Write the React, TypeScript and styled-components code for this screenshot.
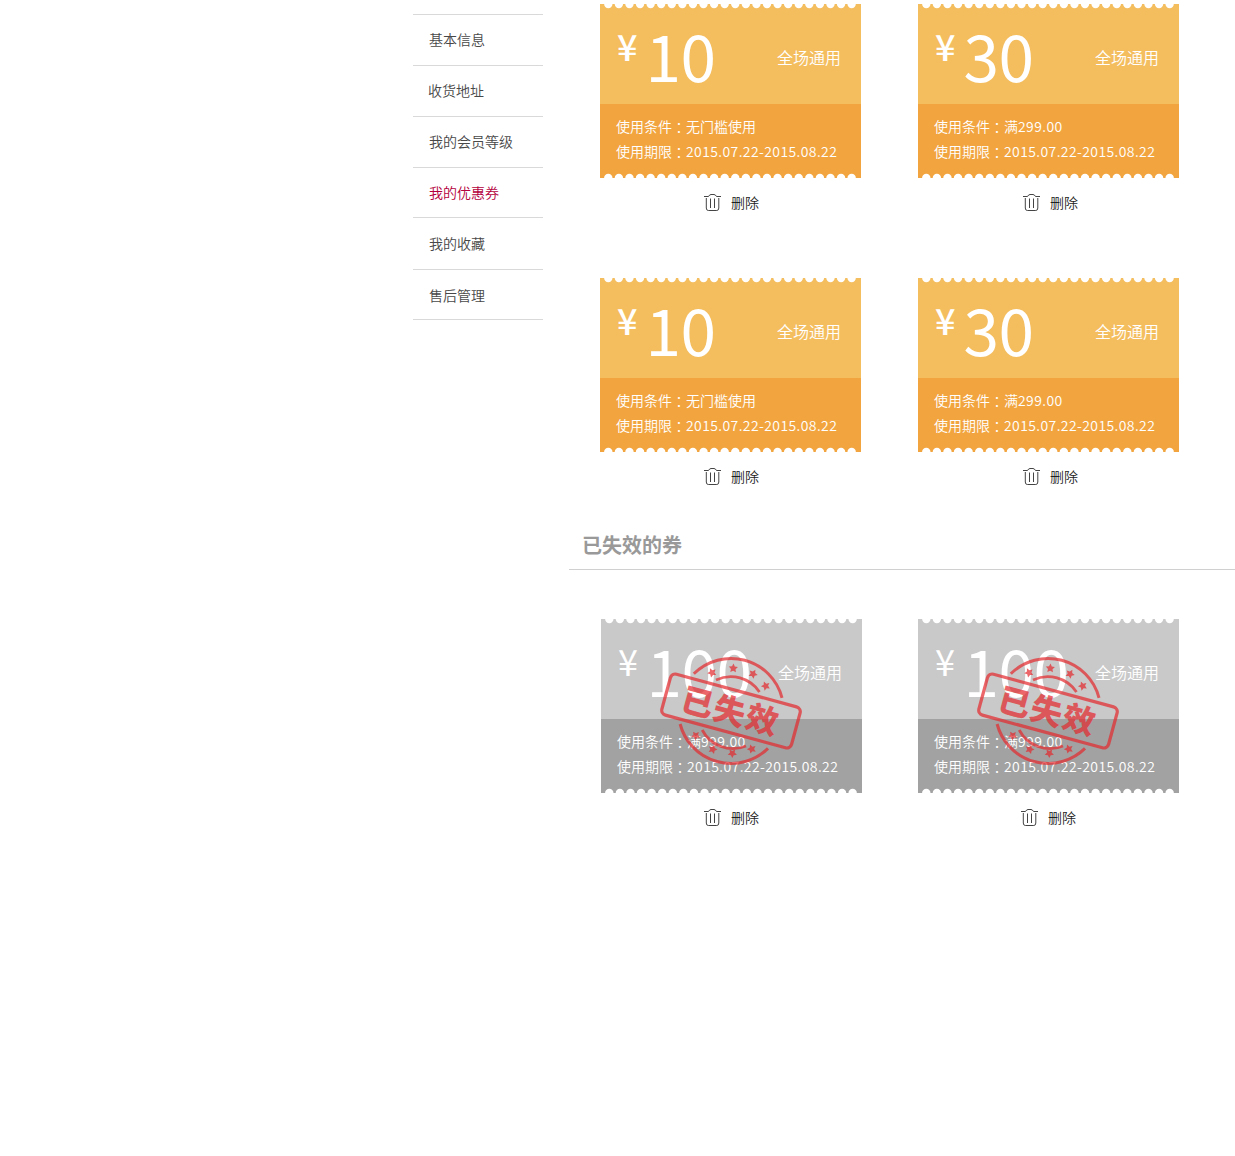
import React from "react";
import styled, { createGlobalStyle, css } from "styled-components";

const GlobalStyle = createGlobalStyle`
  * { box-sizing: border-box; }
  body {
    margin: 0;
    background: #fff;
    font-family: "Noto Sans CJK SC", "Liberation Sans", sans-serif;
  }
  ul { margin: 0; padding: 0; list-style: none; }
`;

const Page = styled.div`
  display: flex;
  align-items: flex-start;
  width: 1235px;
  height: 1156px;
  padding-left: 413px;
  overflow: hidden;
`;

const Sidebar = styled.nav`
  flex: none;
  width: 130px;
  margin-top: 14px;
  border-top: 1px solid #d9d9d9;
`;

const MenuItem = styled.li<{ $active?: boolean; $height: number; $indent: number; $line: number }>`
  height: ${(p) => p.$height}px;
  padding-left: ${(p) => p.$indent}px;
  border-bottom: 1px solid #d9d9d9;
  font-size: 14px;
  font-weight: 350;
  line-height: ${(p) => p.$line}px;
  color: ${(p) => (p.$active ? "#b4003c" : "#484848")};
`;

const Main = styled.main`
  flex: none;
  width: 666px;
  margin-left: 26px;
  padding-top: 4px;
`;

const CouponRow = styled.div<{ $left: number; $gap: number }>`
  display: flex;
  gap: ${(p) => p.$gap}px;
  padding-left: ${(p) => p.$left}px;
`;

const CouponCell = styled.div`
  width: 261px;
  height: 274px;
`;

const Ticket = styled.article`
  position: relative;
  width: 261px;
  height: 174px;
  color: #fff;
`;

const TicketTop = styled.div<{ $expired?: boolean }>`
  display: flex;
  height: 100px;
  padding: 0 20px 0 17px;
  background: ${(p) => (p.$expired ? "#c9c9c9" : "#f4bd5e")};
`;

const Currency = styled.span<{ $expired?: boolean }>`
  width: 28.5px;
  padding-top: 15px;
  font-size: 36px;
  font-weight: ${(p) => (p.$expired ? 400 : 500)};
  line-height: 52px;
`;

const Amount = styled.span`
  padding-top: 4px;
  font-size: 64px;
  line-height: 92px;
  letter-spacing: -0.5px;
`;

const Scope = styled.span`
  margin-left: auto;
  padding-top: 41px;
  font-size: 16px;
  font-weight: 350;
  line-height: 24px;
`;

const TicketBottom = styled.div<{ $expired?: boolean }>`
  height: 74px;
  padding: 10px 0 0 16px;
  background: ${(p) => (p.$expired ? "#a2a2a2" : "#f2a53f")};
`;

const Term = styled.div`
  display: flex;
  height: 25px;
  font-size: 14px;
  font-weight: 350;
  line-height: 25px;
  white-space: nowrap;
`;

const Colon = styled.span`
  padding-top: 1px;
  font-family: "Noto Sans CJK TC", sans-serif;
`;

const Digits = styled.span`
  letter-spacing: 0.4px;
`;

const Edge = styled.svg<{ $side: "top" | "bottom" }>`
  position: absolute;
  left: 0;
  ${(p) => (p.$side === "top" ? css`top: 0;` : css`bottom: 0; transform: scaleY(-1);`)}
  display: block;
`;

const StampMark = styled.svg`
  position: absolute;
  left: 55px;
  top: 32px;
  overflow: visible;
`;

const DeleteButton = styled.button<{ $shift: number }>`
  display: flex;
  align-items: center;
  gap: 10px;
  height: 24px;
  margin: 12px 0 0 ${(p) => p.$shift}px;
  padding: 0;
  border: 0;
  background: none;
  color: #222;
  font-family: inherit;
  font-size: 14px;
  font-weight: 350;
  line-height: 24px;
`;

const SectionTitle = styled.h2`
  height: 50px;
  margin: -32px 0 49px;
  padding-left: 13px;
  border-bottom: 1px solid #d0d0d0;
  color: #999;
  font-size: 20px;
  font-weight: 700;
  line-height: 50px;
`;

function Scallops({ side }: { side: "top" | "bottom" }) {
  return (
    <Edge $side={side} width="261" height="5" viewBox="0 0 261 5" fill="#fff">
      {Array.from({ length: 24 }, (_, i) => (
        <circle key={i} cx={8.3 + i * 10.58} cy="0" r="4.2" />
      ))}
    </Edge>
  );
}

function TrashIcon() {
  return (
    <svg width="17" height="18" viewBox="0 0 17 18" fill="none" stroke="#444" strokeWidth="1">
      <path d="M0 3.5h4.5Q5.5 1.5 7 1.5h3Q11.5 1.5 12.5 3.5H17M2.3 5v10q0 2.500 2 2.500h8.500q2 0 2-2.500V5M6.500 5.500v9.500M10.500 5.500v9.500" />
    </svg>
  );
}

function starPoints(cx: number, cy: number, rot: number) {
  return Array.from({ length: 10 }, (_, i) => {
    const r = i % 2 ? 2.4 : 4.8;
    const a = ((i * 36 - 90 + rot) * Math.PI) / 180;
    return `${(cx + r * Math.cos(a)).toFixed(2)},${(cy + r * Math.sin(a)).toFixed(2)}`;
  }).join(" ");
}

const STARS: [number, number, number][] = [
  [-19, -38.3, -25],
  [2.3, -42.7, 3],
  [22, -37, 30],
  [34.7, -25, 50],
  [-35.3, 24.7, 40],
  [-18.3, 38.3, 20],
  [1.3, 42.3, 36],
  [20.7, 38, -20],
];

function ExpiredStamp() {
  return (
    <StampMark width="150" height="120" viewBox="-75 -60 150 120">
      <g opacity="0.7" fill="none" stroke="#e4282c" strokeWidth="3">
        <path d="M-37.200-37.200A52.700 52.700 0 0 1 51-13.200" />
        <path d="M-50.900 13A52.700 52.700 0 0 0 37 37.400" />
        <path d="M-15-31A34.500 34.500 0 0 1 28.500-19" strokeWidth="2.8" />
        <path d="M-28.800 19A34.500 34.500 0 0 0 15 35" strokeWidth="2.8" />
        <g fill="#e4282c" stroke="none">
          {STARS.map(([x, y, r]) => (
            <polygon key={`${x}`} points={starPoints(x, y, r)} />
          ))}
        </g>
        <g transform="rotate(15.2)">
          <rect x="-67.2" y="-21.2" width="134.400" height="42.400" rx="5" strokeWidth="3.2" />
          <text
            x="-0.5"
            y="12"
            fill="#e4282c"
            stroke="none"
            textAnchor="middle"
            fontFamily="'Noto Sans CJK SC', sans-serif"
            fontSize="32"
            fontWeight="900"
            letterSpacing="1.2"
          >
            已失效
          </text>
        </g>
      </g>
    </StampMark>
  );
}

interface CouponProps {
  amount: string;
  conditionText?: string;
  conditionValue?: string;
  expired?: boolean;
  deleteShift: number;
}

function Coupon({ amount, conditionText, conditionValue, expired, deleteShift }: CouponProps) {
  return (
    <CouponCell>
      <Ticket>
        <TicketTop $expired={expired}>
          <Currency $expired={expired}>¥</Currency>
          <Amount>{amount}</Amount>
          <Scope>全场通用</Scope>
        </TicketTop>
        <TicketBottom $expired={expired}>
          <Term>
            使用条件<Colon lang="zh-TW">：</Colon>
            {conditionText}
            <Digits>{conditionValue}</Digits>
          </Term>
          <Term>
            使用期限<Colon lang="zh-TW">：</Colon>
            <Digits>2015.07.22-2015.08.22</Digits>
          </Term>
        </TicketBottom>
        <Scallops side="top" />
        <Scallops side="bottom" />
        {expired && <ExpiredStamp />}
      </Ticket>
      <DeleteButton $shift={deleteShift}>
        <TrashIcon />
        删除
      </DeleteButton>
    </CouponCell>
  );
}

const MENU = [
  { label: "基本信息", height: 51, indent: 16, line: 48 },
  { label: "收货地址", height: 51, indent: 15, line: 48 },
  { label: "我的会员等级", height: 51, indent: 16, line: 48 },
  { label: "我的优惠券", height: 50, indent: 16, line: 48, active: true },
  { label: "我的收藏", height: 52, indent: 16, line: 50 },
  { label: "售后管理", height: 50, indent: 16, line: 50 },
];

export default function App() {
  return (
    <>
      <GlobalStyle />
      <Page>
        <Sidebar>
          <ul>
            {MENU.map((m) => (
              <MenuItem key={m.label} $height={m.height} $indent={m.indent} $line={m.line} $active={m.active}>
                {m.label}
              </MenuItem>
            ))}
          </ul>
        </Sidebar>
        <Main>
          {[0, 1].map((row) => (
            <CouponRow key={row} $left={31} $gap={57}>
              <Coupon amount="10" conditionText="无门槛使用" deleteShift={104} />
              <Coupon amount="30" conditionText="满" conditionValue="299.00" deleteShift={105} />
            </CouponRow>
          ))}
          <SectionTitle>已失效的券</SectionTitle>
          <CouponRow $left={32} $gap={56}>
            <Coupon amount="100" conditionText="满" conditionValue="999.00" expired deleteShift={103} />
            <Coupon amount="100" conditionText="满" conditionValue="999.00" expired deleteShift={103} />
          </CouponRow>
        </Main>
      </Page>
    </>
  );
}
